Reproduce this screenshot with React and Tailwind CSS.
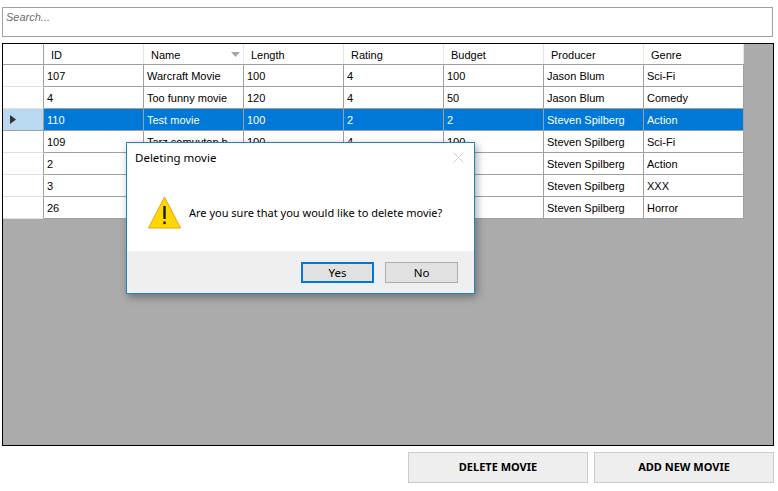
const columns = ["ID", "Name", "Length", "Rating", "Budget", "Producer", "Genre"];

// cells behind the dialog stay empty, only what shows is filled in
const rows = [
  ["107", "Warcraft Movie", "100", "4", "100", "Jason Blum", "Sci-Fi"],
  ["4", "Too funny movie", "120", "4", "50", "Jason Blum", "Comedy"],
  ["110", "Test movie", "100", "2", "2", "Steven Spilberg", "Action"],
  ["109", "Tarz comuyton b", "100", "4", "100", "Steven Spilberg", "Sci-Fi"],
  ["2", "", "", "", "", "Steven Spilberg", "Action"],
  ["3", "", "", "", "", "Steven Spilberg", "XXX"],
  ["26", "", "", "", "", "Steven Spilberg", "Horror"],
];

function Row({ row, selected }) {
  return (
    <div className={`flex h-[22px] w-[741px] ${selected ? "bg-[#0078d7] text-white" : "bg-white text-black"}`}>
      <div className={`w-[41px] shrink-0 flex items-center border-r border-r-[#a0a0a0] border-b pl-[7px] ${selected ? "bg-[#b9d9f1] border-b-[#a0a0a0]" : "bg-white border-b-[#e0e0e0]"}`}>
        {selected && (
          <svg width="6" height="9" viewBox="0 0 6 9">
            <path d="M0 0 L6 4.5 L0 9 Z" fill="#333" />
          </svg>
        )}
      </div>
      {row.map((val, i) => (
        <div key={i} className="w-[100px] shrink-0 flex items-center pl-[3px] pt-[2px] border-r border-b border-[#a0a0a0] whitespace-nowrap overflow-hidden">
          {val}
        </div>
      ))}
    </div>
  );
}

export default function App() {
  return (
    <div className="relative w-[778px] h-[491px] bg-white overflow-hidden font-['Liberation_Sans',sans-serif] text-[11px]">
      {/* Search */}
      <div className="pt-[7px] pl-[2px]">
        <div className="w-[771px] h-[30px] border border-[#a0a0a0] pl-[3px] pt-[1px] italic text-[11px] leading-[16px] text-[#6d6d6d]">
          Search...
        </div>
      </div>

      {/* Grid */}
      <div className="mt-[6px] ml-[2px] w-[772px] h-[403px] border border-black bg-[#ababab]">
        <div className="flex h-[21px] bg-white border-b border-b-[#a0a0a0] w-[741px]">
          <div className="w-[41px] shrink-0 border-r border-r-[#a0a0a0]"></div>
          {columns.map((c) => (
            <div key={c} className="relative w-[100px] shrink-0 flex items-center pl-[7px] pt-[2px] border-r border-r-[#e5e5e5] text-black">
              {c}
              {c === "Name" && (
                <svg className="absolute right-[3px] top-[8px]" width="9" height="5" viewBox="0 0 9 5">
                  <path d="M0 0 H9 L4.5 5 Z" fill="#a6a6a6" />
                </svg>
              )}
            </div>
          ))}
        </div>
        {rows.map((r, i) => (
          <Row key={r[0]} row={r} selected={i === 2} />
        ))}
      </div>

      {/* Bottom buttons */}
      <div className="mt-[6px] ml-[408px] flex gap-[6px]">
        <button className="w-[180px] h-[31px] bg-[#eeeeee] border border-[#cccccc] font-bold text-[11px] font-['Noto_Sans',sans-serif] text-black">
          DELETE MOVIE
        </button>
        <button className="w-[180px] h-[31px] bg-[#eeeeee] border border-[#cccccc] font-bold text-[11px] font-['Noto_Sans',sans-serif] text-black">
          ADD NEW MOVIE
        </button>
      </div>

      {/* Dialog */}
      <div className="absolute left-[126px] top-[142px] w-[349px] h-[152px] bg-white border border-[#1b87b8] shadow-[2px_3px_8px_rgba(0,0,0,0.35)] flex flex-col font-['Noto_Sans',sans-serif] text-black">
        <div className="flex-1 relative">
          <div className="pl-[8px] pt-[6px] text-[11.5px] leading-[18px]">Deleting movie</div>
          <svg className="absolute right-[10px] top-[9px]" width="11" height="11" viewBox="0 0 11 11">
            <path d="M0.5 0.5 L10.5 10.5 M10.5 0.5 L0.5 10.5" stroke="#cfcfcf" strokeWidth="1" fill="none" />
          </svg>
          <div className="flex items-center pl-[21px] pt-[29px]">
            <svg width="33" height="33" viewBox="0 0 33 33" className="shrink-0">
              <path d="M16.5 1 L32.5 32 H0.5 Z" fill="#ffd800" stroke="#e8a317" strokeWidth="1" strokeLinejoin="round" />
              <rect x="15.3" y="10" width="2.4" height="13" fill="#1a1a1a" />
              <rect x="15.3" y="25.5" width="2.4" height="2.6" fill="#1a1a1a" />
            </svg>
            <span className="ml-[8px] mt-[2px] text-[11px] whitespace-nowrap">Are you sure that you would like to delete movie?</span>
          </div>
        </div>
        <div className="h-[42px] bg-[#efefef] flex justify-end gap-[11px] pr-[16px] pt-[11px]">
          <button className="w-[73px] h-[21px] bg-[#e1e1e1] border-2 border-[#0078d7] text-[11.5px] leading-none">Yes</button>
          <button className="w-[73px] h-[21px] bg-[#e1e1e1] border border-[#adadad] text-[11.5px] leading-none">No</button>
        </div>
      </div>
    </div>
  );
}
